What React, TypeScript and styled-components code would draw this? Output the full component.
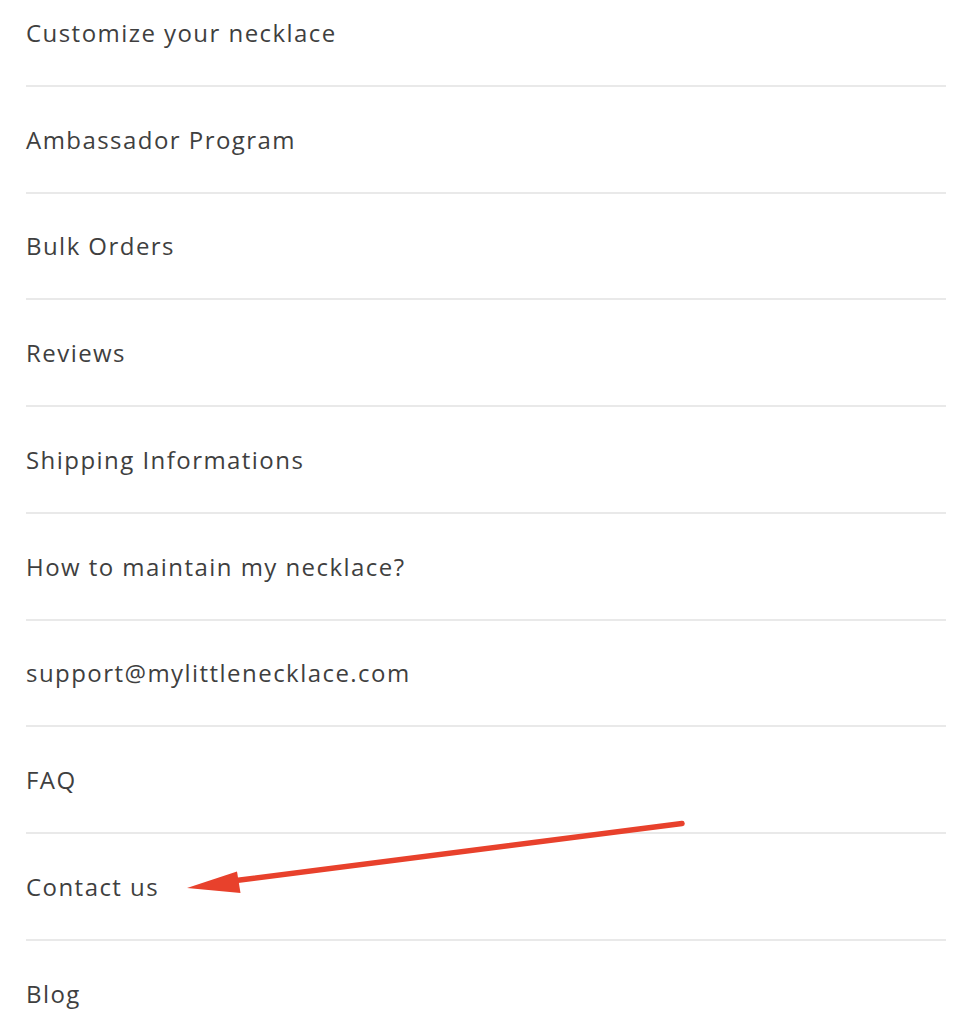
import React from "react";
import styled, { createGlobalStyle } from "styled-components";

const GlobalStyle = createGlobalStyle`
  html, body {
    margin: 0;
    padding: 0;
    background: #ffffff;
  }
  body {
    font-family: "Open Sans", "Lato", sans-serif;
    overflow: hidden;
  }
`;

const Page = styled.div`
  position: relative;
  width: 972px;
  height: 1022px;
  overflow: hidden;
  background: #ffffff;
`;

const Menu = styled.ul`
  list-style: none;
  margin: -20px 0 0 0;
  padding: 0 26px;
  display: flex;
  flex-direction: column;
`;

const Item = styled.li`
  box-sizing: border-box;
  height: 106.75px;
  display: flex;
  align-items: center;
  border-bottom: 2px solid #e9e9e9;
`;

const Link = styled.a`
  font-family: "Open Sans", sans-serif;
  font-size: 24px;
  font-weight: 400;
  letter-spacing: 1.45px;
  color: #3f3f3f;
  text-decoration: none;
`;

const Overlay = styled.svg`
  position: absolute;
  left: 0;
  top: 0;
  pointer-events: none;
`;

const items = [
  "Customize your necklace",
  "Ambassador Program",
  "Bulk Orders",
  "Reviews",
  "Shipping Informations",
  "How to maintain my necklace?",
  "support@mylittlenecklace.com",
  "FAQ",
  "Contact us",
  "Blog",
];

export default function App() {
  return (
    <Page>
      <GlobalStyle />
      <Menu>
        {items.map((t) => (
          <Item key={t}>
            <Link href="#">{t}</Link>
          </Item>
        ))}
      </Menu>
      <Overlay width="972" height="1022" viewBox="0 0 972 1022">
        <line x1="682" y1="823.5" x2="232" y2="881" stroke="#e8412c" strokeWidth="5.5" strokeLinecap="round" />
        <polygon points="187,888 237,871.5 240.5,893" fill="#e8412c" />
      </Overlay>
    </Page>
  );
}
